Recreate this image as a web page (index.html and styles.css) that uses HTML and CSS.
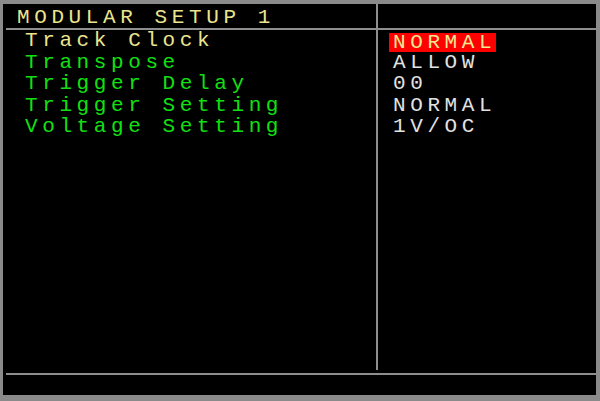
FILE: index.html
```html
<!DOCTYPE html>
<html>
<head>
<meta charset="utf-8">
<link rel="stylesheet" href="styles.css">
</head>
<body>
<div class="screen">
  <div class="row head">
    <div class="left title">MODULAR SETUP 1</div>
    <div class="vline"></div>
    <div class="right"></div>
  </div>
  <div class="hline"></div>
  <div class="row main">
    <div class="left labels">
      <div class="item sel">Track Clock</div>
      <div class="item">Transpose</div>
      <div class="item">Trigger Delay</div>
      <div class="item">Trigger Setting</div>
      <div class="item">Voltage Setting</div>
    </div>
    <div class="vline short"></div>
    <div class="right values">
      <div class="item"><span class="hl">NORMAL</span></div>
      <div class="item">ALLOW</div>
      <div class="item">00</div>
      <div class="item">NORMAL</div>
      <div class="item">1V/OC</div>
    </div>
  </div>
  <div class="hline"></div>
  <div class="footer"></div>
</div>
</body>
</html>
```
FILE: styles.css
```css
html, body {
  margin: 0;
  padding: 0;
  background: #8a8a8a;
  width: 600px;
  height: 401px;
  overflow: hidden;
}
.screen {
  margin: 4px 4px 0 3px;
  height: 391px;
  background: #000;
  display: flex;
  flex-direction: column;
  font-family: "Liberation Mono", monospace;
  font-size: 21px;
  letter-spacing: 4.6px;
}
.row {
  display: flex;
}
.head {
  height: 24px;
}
.main {
  flex: 1;
}
.left {
  width: 373px;
  flex: none;
}
.vline {
  width: 2px;
  background: #8e8e8e;
  flex: none;
}
.vline.short {
  margin-bottom: 3px;
}
.right {
  flex: 1;
}
.hline {
  height: 2px;
  margin-left: 3px;
  background: #8e8e8e;
}
.title {
  color: #ece48e;
  line-height: 24px;
  padding: 2px 0 0 14px;
  box-sizing: border-box;
}
.labels {
  padding-left: 22px;
  box-sizing: border-box;
  color: #12e012;
}
.item {
  line-height: 21.5px;
  height: 21.5px;
  white-space: pre;
}
.labels .sel {
  color: #ece48e;
}
.values {
  padding-left: 15px;
  color: #e2e2e2;
}
.hl {
  display: inline-block;
  background: #ff0000;
  color: #f4e890;
  line-height: 19px;
  padding: 0 0 0 4px;
  margin-left: -4px;
  vertical-align: top;
  margin-top: 2.5px;
}
.footer {
  height: 20px;
}
```
